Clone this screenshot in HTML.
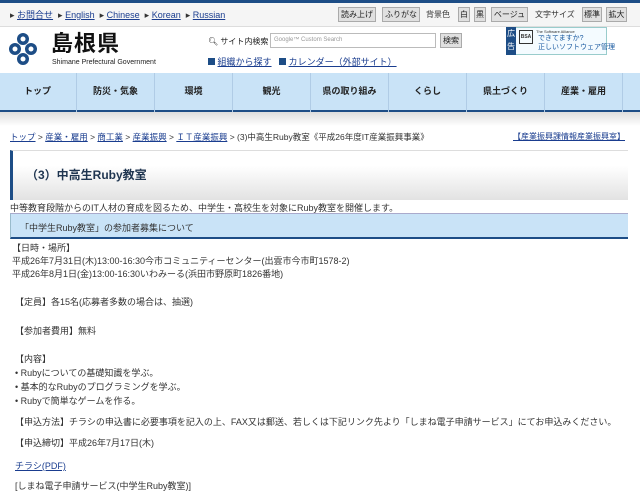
<!DOCTYPE html>
<html><head><meta charset="utf-8"><style>
*{margin:0;padding:0;box-sizing:border-box}
body{width:640px;height:494px;overflow:hidden;background:#fff;font-family:"Liberation Sans","Noto Sans CJK JP",sans-serif;color:#333;font-size:9px;position:relative}
.a{position:absolute;white-space:nowrap}
a,.u{color:#1a3d8f;text-decoration:underline}
.btn{position:absolute;top:7px;height:15px;background:#e0e0e0;border:1px solid #aaa;font-size:8px;line-height:13px;text-align:center;color:#222;overflow:hidden;white-space:nowrap}
.nav{position:absolute;top:73px;height:39px;width:78px;border-right:1px solid #b0cce6;text-align:center;line-height:37px;font-size:9px;font-weight:bold;color:#222}
</style></head><body>
<div class="a" style="left:0;top:0;width:640px;height:3px;background:#1d4d86"></div>
<div class="a" style="left:0;top:3px;width:640px;height:24px;background:#f5f5f5;border-bottom:1px solid #ddd"></div>
<div class="a" style="left:10px;top:8px;font-size:9px">▸ <span class="u">お問合せ</span> &nbsp;▸ <span class="u">English</span> &nbsp;▸ <span class="u">Chinese</span> &nbsp;▸ <span class="u">Korean</span> &nbsp;▸ <span class="u">Russian</span></div>
<div class="btn" style="left:338px;width:38px">読み上げ</div>
<div class="btn" style="left:382px;width:38px">ふりがな</div>
<div class="a" style="left:426px;top:9px;font-size:8px">背景色</div>
<div class="btn" style="left:458px;width:12px">白</div>
<div class="btn" style="left:474px;width:12px">黒</div>
<div class="btn" style="left:491px;width:37px">ベージュ</div>
<div class="a" style="left:535px;top:9px;font-size:8px">文字サイズ</div>
<div class="btn" style="left:582px;width:20px">標準</div>
<div class="btn" style="left:606px;width:21px">拡大</div>
<svg class="a" style="left:9px;top:31px" width="28" height="36" viewBox="0 0 28 36"><g fill="#1d4d86"><circle cx="14" cy="8" r="6"/><circle cx="6" cy="18" r="6"/><circle cx="22" cy="18" r="6"/><circle cx="14" cy="28" r="6"/></g><g fill="#fff"><circle cx="14" cy="8" r="2.5"/><circle cx="6" cy="18" r="2.5"/><circle cx="22" cy="18" r="2.5"/><circle cx="14" cy="28" r="2.5"/></g></svg>
<div class="a" style="left:51px;top:31px;font-size:22px;line-height:26px;font-weight:bold;color:#111;letter-spacing:1px">島根県</div>
<div class="a" style="left:52px;top:59px;font-size:7px;color:#222">Shimane Prefectural Government</div>
<div class="a" style="left:208px;top:36px;font-size:8px;color:#222">🔍︎ サイト内検索</div>
<div class="a" style="left:270px;top:33px;width:166px;height:15px;border:1px solid #bbb;font-size:6px;color:#999;line-height:13px;padding-left:3px;background:#fff">Google™ Custom Search</div>
<div class="btn" style="left:440px;top:33px;width:22px">検索</div>
<div class="a" style="left:208px;top:55px"><span style="display:inline-block;width:7px;height:7px;background:#1d4d86"></span> <span class="u">組織から探す</span> &nbsp;&nbsp;<span style="display:inline-block;width:7px;height:7px;background:#1d4d86"></span> <span class="u">カレンダー（外部サイト）</span></div>
<div class="a" style="left:506px;top:27px;width:101px;height:28px;border:1px solid #9cc;background:#f4fbff"></div>
<div class="a" style="left:506px;top:27px;width:10px;height:28px;background:#1d4d86;color:#fff;font-size:8px;line-height:13px;text-align:center">広<br>告</div>
<div class="a" style="left:519px;top:30px;width:14px;height:14px;border:1px solid #333;font-size:5px;font-weight:bold;text-align:center;line-height:12px">BSA</div>
<div class="a" style="left:536px;top:29px;font-size:4px">The Software Alliance</div>
<div class="a" style="left:538px;top:34px;font-size:7px;color:#1a5aa0;line-height:9px">できてますか?<br>正しいソフトウェア管理</div>
<div class="a" style="left:0;top:73px;width:640px;height:39px;background:#c9e3f7;border-bottom:2px solid #1d4d86"></div>
<div class="nav" style="left:-1px">トップ</div>
<div class="nav" style="left:77px">防災・気象</div>
<div class="nav" style="left:155px">環境</div>
<div class="nav" style="left:233px">観光</div>
<div class="nav" style="left:311px">県の取り組み</div>
<div class="nav" style="left:389px">くらし</div>
<div class="nav" style="left:467px">県土づくり</div>
<div class="nav" style="left:545px">産業・雇用</div>
<div class="a" style="left:0;top:112px;width:640px;height:14px;background:linear-gradient(#ddd,#fff)"></div>
<div class="a" style="left:10px;top:131px;font-size:8.5px"><span class="u">トップ</span> &gt; <span class="u">産業・雇用</span> &gt; <span class="u">商工業</span> &gt; <span class="u">産業振興</span> &gt; <span class="u">ＩＴ産業振興</span> &gt; (3)中高生Ruby教室《平成26年度IT産業振興事業》</div>
<div class="a u" style="left:513px;top:131px;font-size:8px">【産業振興課情報産業振興室】</div>
<div class="a" style="left:10px;top:150px;width:618px;height:50px;border-left:3px solid #1d4d86;border-top:1px solid #ddd;background:linear-gradient(#fff 30%,#e2e2e2)"></div>
<div class="a" style="left:26px;top:166px;font-size:12px;font-weight:bold;color:#1f3550">（3）中高生Ruby教室</div>
<div class="a" style="left:10px;top:201px">中等教育段階からのIT人材の育成を図るため、中学生・高校生を対象にRuby教室を開催します。</div>
<div class="a" style="left:10px;top:213px;width:618px;height:26px;background:#c9e3f7;border-top:1px solid #aac;border-bottom:2px solid #1d4d86;border-left:1px solid #9bc"></div>
<div class="a" style="left:20px;top:221px">「中学生Ruby教室」の参加者募集について</div>
<div class="a" style="left:12px;top:241px">【日時・場所】</div>
<div class="a" style="left:12px;top:254px">平成26年7月31日(木)13:00-16:30今市コミュニティーセンター(出雲市今市町1578-2)</div>
<div class="a" style="left:12px;top:267px">平成26年8月1日(金)13:00-16:30いわみーる(浜田市野原町1826番地)</div>
<div class="a" style="left:15px;top:295px">【定員】各15名(応募者多数の場合は、抽選)</div>
<div class="a" style="left:15px;top:324px">【参加者費用】無料</div>
<div class="a" style="left:15px;top:352px">【内容】</div>
<div class="a" style="left:15px;top:366px">• Rubyについての基礎知識を学ぶ。</div>
<div class="a" style="left:15px;top:380px">• 基本的なRubyのプログラミングを学ぶ。</div>
<div class="a" style="left:15px;top:394px">• Rubyで簡単なゲームを作る。</div>
<div class="a" style="left:15px;top:415px">【申込方法】チラシの申込書に必要事項を記入の上、FAX又は郵送、若しくは下記リンク先より「しまね電子申請サービス」にてお申込みください。</div>
<div class="a" style="left:15px;top:436px">【申込締切】平成26年7月17日(木)</div>
<div class="a u" style="left:15px;top:459px">チラシ(PDF)</div>
<div class="a" style="left:15px;top:479px">[しまね電子申請サービス(中学生Ruby教室)]</div>
</body></html>
